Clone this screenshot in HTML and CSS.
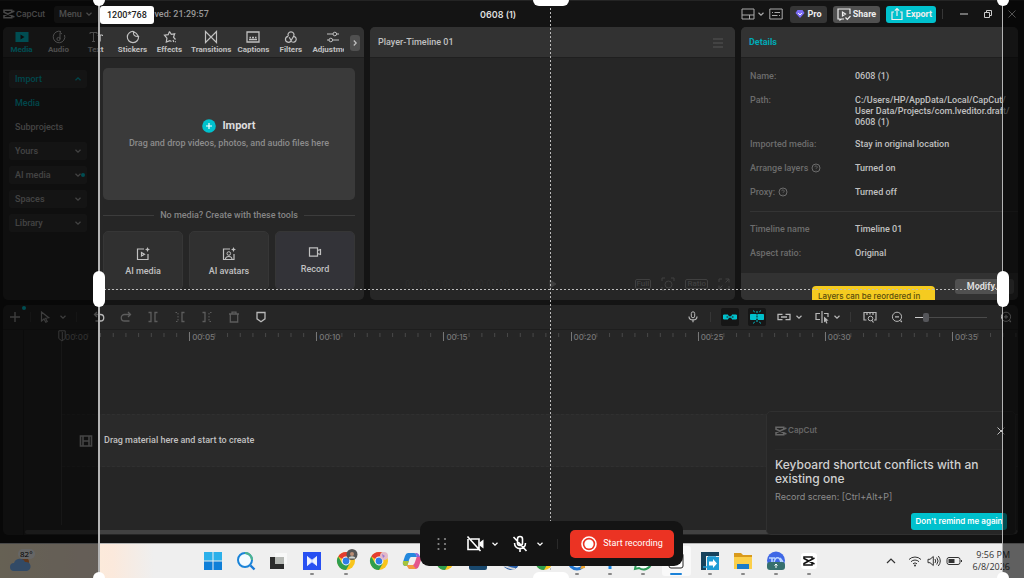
FILE: index.html
```html
<!DOCTYPE html>
<html lang="en">
<head>
<meta charset="utf-8">
<meta name="viewport" content="width=device-width, initial-scale=1">
<title>0608 (1) - CapCut</title>
<link rel="stylesheet" href="styles.css">
</head>
<body>
<svg class="symbols" aria-hidden="true">
  <symbol id="chev" viewBox="0 0 8 8"><path d="M1.5 2.8 4 5.2 6.5 2.8"/></symbol>
  <symbol id="chev-up" viewBox="0 0 8 8"><path d="M1.5 5.2 4 2.8 6.5 5.2"/></symbol>
  <symbol id="capcut" viewBox="0 0 12 10"><path d="M8.8 2.9V1.2H1v2.1L11.4 8M8.800 7.100v1.700H1V6.700L11.400 2" stroke-width="1.6"/></symbol>
  <symbol id="chrome" viewBox="0 0 20 20"><g stroke="none"><circle cx="10" cy="10" r="9" fill="#f9c51d"/><path d="M10 10 2.2 5.5A9 9 0 0 1 17.8 5.5H10z" fill="#e43d30"/><path d="M10 19A9 9 0 0 1 2.2 5.5L6.100 12.200l7.800 0z" fill="#2f9e4f"/><circle cx="10" cy="10" r="4.400" fill="#fff"/><circle cx="10" cy="10" r="3.400" fill="#2f7de8"/></g></symbol>
  <symbol id="help" viewBox="0 0 10 10"><circle cx="5" cy="5" r="4"/><path d="M3.8 4.100a1.200 1.200 0 1 1 1.800 1c-.5.300-.6.500-.6.900M5 7v.5" stroke-width=".8"/></symbol>
</svg>

<main class="app">
  <header class="titlebar">
    <div class="title-left">
      <span class="brand"><svg class="i12"><use href="#capcut"/></svg>CapCut</span>
      <button class="menu-btn">Menu <svg class="i8"><use href="#chev"/></svg></button>
      <span class="saved">Auto saved: 21:29:57</span>
    </div>
    <h1 class="project">0608 (1)</h1>
    <div class="title-right">
      <button class="plain layout" aria-label="Layout"><svg class="i14" viewBox="0 0 14 14"><path d="M1 2h12v10H1zM1 8h12M8.500 8v4"/></svg><svg class="i8"><use href="#chev"/></svg></button>
      <button class="plain keys" aria-label="Shortcuts"><svg class="i14" viewBox="0 0 14 14"><path d="M.8 2h12.400v10H.8zM3 5.500h1M5.500 5.500H11M3 8.500h5.500M10 8.500h1"/></svg></button>
      <button class="pill pro"><svg class="i10" viewBox="0 0 10 10"><path d="M2.500 1h5L9.500 4 5 9 .5 4z" fill="#7b6cf6" stroke="none"/><path d="M3.200 4 5 6l1.800-2" stroke="#fff"/></svg>Pro</button>
      <button class="pill share"><svg class="i14" viewBox="0 0 14 14"><path d="M7 12H4.500L3 13v-1H1V2h12v5M5.500 5v4l3-2zM8.500 10.500l1.800 1.800L13.500 9" stroke-width="1.200"/></svg>Share</button>
      <button class="pill export"><svg class="i14" viewBox="0 0 14 14"><path d="M4 5H2v7.500h10V5h-2M7 9V1.500M4.800 3.700 7 1.500l2.200 2.200" stroke-width="1.200"/></svg>Export</button>
      <span class="sep"></span>
      <button class="plain win" aria-label="Minimize"><svg class="i10" viewBox="0 0 10 10"><path d="M1 5h8"/></svg></button>
      <button class="plain win" aria-label="Restore"><svg class="i10" viewBox="0 0 10 10"><path d="M1.500 3.500h5v5h-5zM3.500 3.500v-2h5v5h-2"/></svg></button>
      <button class="plain win" aria-label="Close"><svg class="i10" viewBox="0 0 10 10"><path d="m1.500 1.500 7 7m0-7-7 7"/></svg></button>
    </div>
  </header>

  <div class="workspace">
    <section class="panel media">
      <nav class="panel-head tabs">
        <button class="tab active"><svg class="i14" viewBox="0 0 14 14"><path d="M.5 2h13v10H.5z" fill="currentColor" stroke="none"/><path d="M5.500 4.500v5l4-2.500z" fill="#222" stroke="none"/></svg>Media</button>
        <button class="tab"><svg class="i14" viewBox="0 0 14 14"><path d="M9 1.500A5.800 5.800 0 1 0 12.500 5M8 9V2.500l2 1.500"/><circle cx="6.500" cy="9" r="1.600"/></svg>Audio</button>
        <button class="tab"><svg class="i14" viewBox="0 0 14 14"><path d="M1 4V2.500h7V4M4.500 2.500v9M3 11.500h3M9 6V5h4.500v1M11.200 5v6.500"/></svg>Text</button>
        <button class="tab"><svg class="i14" viewBox="0 0 14 14"><path d="M7.500 1.500C7 5 8.500 6.700 12.500 6.500 11 3.500 10 2.500 7.500 1.500A5.600 5.600 0 1 0 12.500 6.500" stroke-width="1.200"/></svg>Stickers</button>
        <button class="tab"><svg class="i14" viewBox="0 0 14 14"><path d="m6.500 1.500 1.800 2.800 3.400-.5-1.200 3.400 2 2.300M6.500 1.500 5.200 4.700 1.500 5.200l2.400 2.900L3.300 12l3.500-1.400 1.700 1M10 10l.8 2M12 11.500l.8.500" stroke-width="1.200"/></svg>Effects</button>
        <button class="tab"><svg class="i14" viewBox="0 0 14 14"><path d="M1.500 1.500v11L7 7zM12.500 1.500v11L7 7z" stroke-width="1.200"/></svg>Transitions</button>
        <button class="tab"><svg class="i14" viewBox="0 0 14 14"><path d="M1 2h12v10H1zM3 9.500h8M3.500 7.500h1.500M6 7.500h2M9 7.500h1.500" stroke-width="1.300"/></svg>Captions</button>
        <button class="tab"><svg class="i14" viewBox="0 0 14 14"><path d="M4.400 6.300A3 3 0 1 1 9.600 6.300L7.400 10M9.800 6.300a3 3 0 1 1-3 4.700M4.200 6.300a3 3 0 1 0 3 4.200L5.200 7.200" stroke-width="1.200"/></svg>Filters</button>
        <button class="tab last"><svg class="i14" viewBox="0 0 14 14"><path d="M1 4h6M10.500 4H13M1 10h2M7 10h6" stroke-width="1.200"/><circle cx="8.800" cy="4" r="1.800"/><circle cx="4.800" cy="10" r="1.800"/></svg>Adjustment</button>
        <button class="more" aria-label="More tabs"><svg class="i8" viewBox="0 0 8 8"><path d="M2.800 1.500 5.200 4 2.800 6.500"/></svg></button>
      </nav>
      <div class="media-body">
        <nav class="sidebar">
          <button class="side boxed active">Import<svg class="i8"><use href="#chev-up"/></svg></button>
          <button class="side active">Media</button>
          <button class="side">Subprojects</button>
          <button class="side boxed">Yours<svg class="i8"><use href="#chev"/></svg></button>
          <button class="side boxed">AI media<svg class="i8"><use href="#chev"/></svg><i class="dot"></i></button>
          <button class="side boxed">Spaces<svg class="i8"><use href="#chev"/></svg></button>
          <button class="side boxed">Library<svg class="i8"><use href="#chev"/></svg></button>
        </nav>
        <div class="media-main">
          <button class="drop">
            <span class="drop-title"><svg class="i14" viewBox="0 0 14 14"><circle cx="7" cy="7" r="6.800" fill="#00c1cd" stroke="none"/><path d="M7 4v6M4 7h6" stroke="#fff" stroke-width="1.200"/></svg>Import</span>
            <span class="drop-hint">Drag and drop videos, photos, and audio files here</span>
          </button>
          <p class="divider">No media? Create with these tools</p>
          <div class="cards">
            <button class="card"><svg class="i14" viewBox="0 0 14 14"><path d="M8 2H1.500v10.500H12V7M5.500 5.500v3.500L8.500 7.200z" stroke-width="1.200"/><path d="m11.500 0 .8 1.700 1.700.8-1.700.8-.8 1.700-.8-1.700L9 2.500l1.700-.8z" fill="currentColor" stroke="none"/></svg>AI media</button>
            <button class="card"><svg class="i14" viewBox="0 0 14 14"><path d="M8 2H1.500v10.500H12V7M3.500 12.500c0-4 6.500-4 6.500 0" stroke-width="1.200"/><circle cx="6.800" cy="6.500" r="1.800"/><path d="m11.500 0 .8 1.700 1.700.8-1.700.8-.8 1.700-.8-1.700L9 2.500l1.700-.8z" fill="currentColor" stroke="none"/></svg>AI avatars</button>
            <button class="card record"><svg class="i14" viewBox="0 0 14 14"><path d="M1.500 2.800h8v8.400h-8zM9.500 5.500 12.500 4.500v5L9.500 8.500" stroke-width="1.200"/></svg>Record</button>
          </div>
        </div>
      </div>
    </section>

    <section class="panel player">
      <div class="panel-head"><h2>Player-Timeline 01</h2><button class="plain faint" aria-label="Player menu"><svg class="i12" viewBox="0 0 12 12"><path d="M1 2h10M1 6h10M1 10h10"/></svg></button></div>
      <div class="player-foot">
        <span class="timecode">00:00:00:00 / 00:00:00:00</span>
        <button class="plain" aria-label="Play"><svg class="i10" viewBox="0 0 10 10"><path d="M2 1v8l6-4z" fill="currentColor"/></svg></button>
        <span class="view-tools">
          <button class="tag">Full</button>
          <button class="plain" aria-label="Focus"><svg class="i14" viewBox="0 0 14 14"><path d="M1 4V1h3M10 1h3v3M4 13H1v-3M10 12l2.500 1.500"/><circle cx="7.500" cy="7.500" r="3.500"/></svg></button>
          <button class="tag">Ratio</button>
          <button class="plain" aria-label="Full screen"><svg class="i12" viewBox="0 0 12 12"><path d="M7.500 1H11v3.500M11 1 7.500 4.500M4.500 11H1V7.500M1 11l3.500-3.500M1 4V1h3M8 11h3V8"/></svg></button>
        </span>
      </div>
    </section>

    <section class="panel details">
      <div class="panel-head"><h2 class="teal">Details</h2></div>
      <dl class="facts">
        <dt>Name:</dt><dd>0608 (1)</dd>
        <dt>Path:</dt><dd class="path">C:/Users/HP/AppData/Local/CapCut/<br>User Data/Projects/com.lveditor.draft/<br>0608 (1)</dd>
        <dt>Imported media:</dt><dd>Stay in original location</dd>
        <dt>Arrange layers <svg class="i10"><use href="#help"/></svg></dt><dd>Turned on</dd>
        <dt>Proxy: <svg class="i10"><use href="#help"/></svg></dt><dd>Turned off</dd>
      </dl>
      <dl class="facts second">
        <dt>Timeline name</dt><dd>Timeline 01</dd>
        <dt>Aspect ratio:</dt><dd>Original</dd>
      </dl>
      <div class="details-foot"><button class="modify">Modify...</button></div>
      <div class="tip">Layers can be reordered in</div>
    </section>
  </div>

  <section class="panel timeline">
    <div class="tools">
      <button class="tool add" aria-label="Add"><svg class="i12" viewBox="0 0 12 12"><path d="M6 1v10M1 6h10" stroke-width="1.400"/></svg><i class="dot"></i></button>
      <span class="sep"></span>
      <button class="tool" aria-label="Select"><svg class="i12" viewBox="0 0 12 12"><path d="M2.500 1v9l2.500-2 1.800 3.200 1.400-.8L6.500 7.200l3.200-.5z" stroke-width="1.200"/></svg></button>
      <button class="tool slim" aria-label="Select options"><svg class="i8"><use href="#chev"/></svg></button>
      <span class="sep gap"></span>
      <button class="tool lit" aria-label="Undo"><svg class="i12" viewBox="0 0 12 12"><path d="M4 1 1.500 3.500 4 6M1.500 3.500H7.500a3.200 3.200 0 0 1 0 6.500H2.500" stroke-width="1.300"/></svg></button>
      <button class="tool off" aria-label="Redo"><svg class="i12" viewBox="0 0 12 12"><path d="M8 1l2.500 2.500L8 6M10.500 3.500H4.500a3.200 3.200 0 0 0 0 6.500h5" stroke-width="1.300"/></svg></button>
      <button class="tool off" aria-label="Split"><svg class="i12" viewBox="0 0 12 12"><path d="M1.500 1.500H4v9H1.500M10.500 1.500H8v9h2.500" stroke-width="1.300"/></svg></button>
      <button class="tool off" aria-label="Delete left"><svg class="i12" viewBox="0 0 12 12"><path d="M10.500 1.500H8v9h2.500" stroke-width="1.300"/><path d="M1.500 1.500H4v9H1.500" stroke-dasharray="1.500 1.500"/></svg></button>
      <button class="tool off" aria-label="Delete right"><svg class="i12" viewBox="0 0 12 12"><path d="M1.500 1.500H4v9H1.500" stroke-width="1.300"/><path d="M10.500 1.500H8v9h2.500" stroke-dasharray="1.500 1.500"/></svg></button>
      <button class="tool off" aria-label="Delete"><svg class="i12" viewBox="0 0 12 12"><path d="M1 3h10M4 3V1.200h4V3M2.300 3v8h7.400V3" stroke-width="1.300"/></svg></button>
      <button class="tool lit" aria-label="Marker"><svg class="i12" viewBox="0 0 12 12"><path d="M2 1.500h8v6.300L6 10.800 2 7.800z" stroke-width="1.300"/></svg></button>
      <span class="grow"></span>
      <button class="tool lit" aria-label="Record voice"><svg class="i12" viewBox="0 0 12 12"><rect x="4.300" y=".8" width="3.400" height="6" rx="1.700"/><path d="M2 5.500c0 4.600 8 4.600 8 0M6 9v2.300" stroke-width="1.200"/></svg></button>
      <span class="sep tight"></span>
      <button class="tool" aria-label="Main track magnet"><span class="on"><svg class="i14" viewBox="0 0 14 14"><path d="M.5 5H5v4H.5zM9 5h4.500v4H9z" fill="currentColor"/><path d="M5 7h4" stroke-width="1.500"/><path d="M3.500 7H5M9 7h1.500" stroke="#161616"/></svg></span></button>
      <button class="tool" aria-label="Auto snapping"><span class="on"><svg class="i14" viewBox="0 0 14 14"><path d="M.5 4.500H6v5H.5zM8 4.500h5.500v5H8z" fill="currentColor"/><path d="M7 1v12M3.500.5l1 1.800M10.500.5l-1 1.800M3.500 13.500l1-1.800M10.500 13.500l-1-1.800" stroke-dasharray="2 1"/></svg></span></button>
      <button class="tool lit" aria-label="Linkage"><svg class="i14" viewBox="0 0 14 14"><path d="M5.500 4.300H1v5.400h4.500M8.500 4.300H13v5.400H8.500M4 7h6" stroke-width="1.300"/></svg></button>
      <button class="tool slim lit" aria-label="Linkage options"><svg class="i8"><use href="#chev"/></svg></button>
      <button class="tool lit" aria-label="Preview axis"><svg class="i14" viewBox="0 0 14 14"><path d="M5 3.500H1v6h4M7 1v12M9 3.500h4V7" stroke-width="1.200"/><path d="m9 6.500 4.500 4-2 .3 1 2.400-1.200.4-1-2.300L9 12.500z" fill="currentColor" stroke="none"/></svg></button>
      <button class="tool slim lit" aria-label="Preview options"><svg class="i8"><use href="#chev"/></svg></button>
      <span class="sep tight"></span>
      <button class="tool lit" aria-label="Fit timeline"><svg class="i14" viewBox="0 0 14 14"><path d="M3.500 10H1V2.500h12V10h-2M4 2.500V5M7 2.500v2M10 2.500V5M9 10.500l1.500 2" stroke-width="1.200"/><circle cx="7.500" cy="8.500" r="2.300"/></svg></button>
      <button class="tool lit" aria-label="Zoom out"><svg class="i12" viewBox="0 0 12 12"><circle cx="6" cy="5.800" r="4.600"/><path d="M4 5.800h4M9.500 9.500l1.300 1.500" stroke-width="1.200"/></svg></button>
      <input class="zoom" type="range" min="0" max="100" value="12" aria-label="Timeline zoom">
      <button class="tool lit end" aria-label="Zoom in"><svg class="i12" viewBox="0 0 12 12"><circle cx="6" cy="5.800" r="4.600"/><path d="M4 5.800h4M6 3.800v4M9.500 9.500l1.300 1.500" stroke-width="1.200"/></svg></button>
    </div>
    <div class="tracks">
      <div class="gutter"></div>
      <div class="lanes">
        <div class="ruler">
          <span>00:00</span><span>00:05</span><span>00:10</span><span>00:15</span><span>00:20</span><span>00:25</span><span>00:30</span><span>00:35</span>
        </div>
        <div class="lane"><svg class="i14" viewBox="0 0 14 14"><path d="M1.500 2h11v10h-11zM4 2v10M10 2v10M4 7h6" stroke-width="1.600"/></svg>Drag material here and start to create</div>
        <svg class="playhead" viewBox="0 0 8 12"><path d="M.8.8h6.400v7.700L4 11 .8 8.500z"/></svg>
      </div>
    </div>
    <div class="scroll"></div>
    <aside class="toast">
      <div class="toast-head"><span class="brand"><svg class="i12"><use href="#capcut"/></svg>CapCut</span><button class="plain" aria-label="Dismiss"><svg class="i10" viewBox="0 0 10 10"><path d="m1.500 1.500 7 7m0-7-7 7"/></svg></button></div>
      <h2>Keyboard shortcut conflicts with an existing one</h2>
      <p>Record screen: [Ctrl+Alt+P]</p>
      <button class="remind">Don't remind me again</button>
    </aside>
  </section>
</main>

<footer class="taskbar">
  <div class="weather"><svg viewBox="0 0 24 24"><circle cx="16" cy="12" r="4" fill="#f08a45"/><path d="M5 21a4 4 0 0 1 0-8 6 6 0 0 1 11-1 4.500 4.500 0 0 1 2 9z" fill="#7db8ff"/></svg><span>82°</span></div>
  <div class="dock">
    <span><svg viewBox="0 0 20 20"><path d="M1 1h8.500v8.500H1zM10.500 1H19v8.500h-8.500z" fill="#2cb0ea"/><path d="M1 10.500h8.500V19H1zM10.500 10.500H19V19h-8.500z" fill="#0f7fd8"/></svg></span>
    <span><svg viewBox="0 0 20 20"><path d="m14.500 14.500 4 4" stroke="#1878d6" stroke-width="2.400"/><circle cx="9" cy="9" r="7" fill="#f4fbff" stroke="#1b84d8" stroke-width="2"/><path d="M9 2a7 7 0 0 1 7 7" stroke="#4db58d" stroke-width="2"/></svg></span>
    <span><svg viewBox="0 0 20 20"><path d="M1 6h14v12H1z" fill="#2b2b2b"/><path d="M6 2h12v11H6z" fill="#f8f8f8"/><path d="M6 6h9v7H6z" fill="#b5b8b4"/></svg></span>
    <span class="run"><svg viewBox="0 0 20 20"><path d="M1 1h18v18H1z" fill="#2850f2"/><path d="m5 5 5 3.500L15 5v10l-5-3.500L5 15z" fill="#bccbff"/><path d="m5 5 5 5-5 5zM15 5l-5 5 5 5z" fill="#eef2ff"/></svg></span>
    <span class="run"><svg viewBox="0 0 20 20"><use href="#chrome"/><circle cx="16" cy="3.500" r="5.500" fill="#555"/><circle cx="16" cy="3" r="2" fill="#b98d74"/><path d="M12.500 7.500c.5-3 6.500-3 7 0z" fill="#cfd4d0"/></svg></span>
    <span><svg viewBox="0 0 20 20"><use href="#chrome"/><circle cx="15" cy="5" r="4" fill="#e4b9c8"/><path d="m13 3 3 2-2 2z" fill="#9b79d6"/></svg></span>
    <span><svg viewBox="0 0 20 20"><path d="M6 2h6q2 0 3 4H9q-1 0-2 3l-2 6H4q-4 0-3-4l2-6q1-3 3-3z" fill="#2388dd"/><path d="M1 10h6l-2 5H4q-4 0-3-5z" fill="#a6c43c"/><path d="M14 18H8q-2 0-3-4h6q1 0 2-3l2-6h1q4 0 3 4l-2 6q-1 3-3 3z" fill="#e4568b"/><path d="M14 18H8q-2 0-3-4h6z" fill="#f39a3f"/><path d="M12 2q2 0 3 4h3q-1-4-4-4z" fill="#8a63d8"/></svg></span>
    <span><svg viewBox="0 0 20 20"><use href="#chrome"/></svg></span>
    <span><svg viewBox="0 0 20 20"><rect x="1" y="1" width="18" height="18" rx="2" fill="#19486d"/></svg></span>
    <span><svg viewBox="0 0 20 20"><circle cx="10" cy="10" r="9" fill="#285ea8"/><path d="M2 14q8 4 12 4" stroke="#d5d8dc" stroke-width="2"/></svg></span>
    <span><svg viewBox="0 0 20 20"><use href="#chrome"/></svg></span>
    <span class="run"><svg viewBox="0 0 20 20"><circle cx="10" cy="10" r="8" stroke="#2377d1" stroke-width="3"/><path d="m13 18 5-1V8z" fill="#f0a530"/></svg></span>
    <span class="run"><svg viewBox="0 0 20 20"><path d="M10 18V6" stroke="#1a87e0" stroke-width="3"/></svg></span>
    <span class="run"><svg viewBox="0 0 20 20"><path d="M2 18l1-5a8 8 0 1 1 3 4z" fill="#fff" stroke="#2d9a58" stroke-width="2"/></svg></span>
    <span class="run current"><svg viewBox="0 0 20 20"><rect x="3" y="2" width="14" height="15" rx="2" fill="#fff" stroke="#222"/></svg></span>
    <span class="run"><svg viewBox="0 0 20 20"><path d="M1 1h18v4H6v14H1z" fill="#16425c"/><path d="M7 6h12v13H7z" fill="#1e9bd4"/><path d="M3 16h4M8 6h8" stroke="#1e9bd4" stroke-width="1.500"/><path d="M9 10.500h4V8l4 4.500-4 4.500v-2.500H9z" fill="#fff"/></svg></span>
    <span class="run"><svg viewBox="0 0 20 20"><path d="M1 2h7l2 2h9v14H1z" fill="#d99a1c"/><path d="M1 6h18v12H1z" fill="#fbcf4a"/><path d="M4 13h12v5H4z" fill="#1b7bc9"/></svg></span>
    <span class="run"><svg viewBox="0 0 20 20"><circle cx="10" cy="9.500" r="9" fill="#3f68e6"/><path d="M3 7h6M6 7v5M8 12c1-7 6-7 7 0M14 7l3 4" stroke="#b9d4ff" stroke-width="1.600"/><rect x="1" y="11" width="18" height="8" rx="3" fill="#36706e"/><path d="M10 17v-4m-1.500 1.500L10 13l1.500 1.500" stroke="#fff"/></svg></span>
    <span class="run"><svg viewBox="0 0 20 20"><rect x="2" y="2" width="16" height="16" rx="3" fill="#fff"/><path d="M13 7.500V6H5v1.500L15.500 13M13 12.500V14H5v-1.500L15.500 7" stroke="#111" stroke-width="1.600"/></svg></span>
  </div>
  <div class="tray">
    <svg class="i10" viewBox="0 0 10 10"><path d="M1 7l4-4 4 4" stroke-width="1.200"/></svg>
    <svg class="i14" viewBox="0 0 14 14"><path d="M1 5.500a8.500 8.500 0 0 1 12 0M3 7.700a5.600 5.600 0 0 1 8 0M5 9.800a2.900 2.900 0 0 1 4 0"/><circle cx="7" cy="11.500" r="1" fill="currentColor" stroke="none"/></svg>
    <svg class="i14" viewBox="0 0 14 14"><path d="M1 5.300h2L6.300 2.500v9L3 8.700H1zM8 5q1.500 2 0 4M9.700 3.500q2.800 3.500 0 7M11.300 2q4 5 0 10"/></svg>
    <svg class="i16" viewBox="0 0 16 14"><rect x="1" y="3.500" width="13" height="7" rx="2"/><path d="M2.500 5h6v4h-6z" fill="currentColor" stroke="none"/><path d="M15.500 6v2"/></svg>
    <time datetime="2026-06-08T21:56"><span>9:56 PM</span><span>6/8/2026</span></time>
  </div>
</footer>

<div class="capture">
  <div class="shade left"></div>
  <div class="frame">
    <i class="guide h"></i><i class="guide v"></i>
    <i class="knob tl"></i><i class="knob tr"></i><i class="knob bl"></i><i class="knob br"></i>
    <i class="bar t"></i><i class="bar b"></i><i class="bar l"></i><i class="bar r"></i>
    <output class="size">1200*768</output>
  </div>
  <div class="shade right"></div>
  <div class="recorder">
    <svg class="grip" viewBox="0 0 10 14"><g fill="#8a8a8a" stroke="none"><circle cx="1.500" cy="2" r="1.100"/><circle cx="8" cy="2" r="1.100"/><circle cx="1.500" cy="7" r="1.100"/><circle cx="8" cy="7" r="1.100"/><circle cx="1.500" cy="12" r="1.100"/><circle cx="8" cy="12" r="1.100"/></g></svg>
    <span class="device">
      <button class="plain" aria-label="Camera off"><svg class="i18" viewBox="0 0 18 18"><path d="M4.500 4H13v10.500H2V4M1.500 1.500l13 14.500" stroke-width="1.600"/><path d="M13.500 7.500 17.500 4.500v9l-4-3z" fill="currentColor" stroke="none"/></svg></button>
      <button class="plain" aria-label="Camera options"><svg class="i8"><use href="#chev"/></svg></button>
    </span>
    <span class="device">
      <button class="plain" aria-label="Microphone off"><svg class="i18" viewBox="0 0 18 18"><path d="M6.500 8V4a2.500 2.500 0 0 1 5 0v4a2.500 2.500 0 0 1-5 0M3.500 8c0 7.500 11 7.500 11 0M9 13.500V17M2.500 2l13 14" stroke-width="1.600"/></svg></button>
      <button class="plain" aria-label="Microphone options"><svg class="i8"><use href="#chev"/></svg></button>
    </span>
    <span class="sep"></span>
    <button class="start"><svg class="i16" viewBox="0 0 16 16"><circle cx="8" cy="8" r="7" stroke-width="1.600"/><circle cx="8" cy="8" r="4.600" fill="currentColor" stroke="none"/></svg>Start recording</button>
  </div>
</div>
</body>
</html>
```
FILE: styles.css
```css
* { box-sizing: border-box; }

body {
  margin: 0;
  height: 100vh;
  display: flex;
  flex-direction: column;
  overflow: hidden;
  background: #141414;
  color: #c0c0c0;
  font: 500 9px/11px Roboto, "Noto Sans", sans-serif;
}

h1, h2, p, dl, dd { margin: 0; font: inherit; }
button { margin: 0; padding: 0; border: 0; background: none; color: inherit; font: inherit; }
svg { flex: none; fill: none; stroke: currentColor; overflow: visible; }
.symbols { position: absolute; width: 0; height: 0; }
.i8 { width: 8px; height: 8px; stroke-width: 1.2px; }
.i10 { width: 10px; height: 10px; }
.i12 { width: 12px; height: 12px; }
.i14 { width: 14px; height: 14px; }
.i16 { width: 16px; height: 16px; }
.i18 { width: 18px; height: 18px; }
.plain { display: inline-flex; align-items: center; justify-content: center; }
.sep { width: 1px; height: 10px; background: #363636; }
.grow { flex: 1; }
.dot { width: 4px; height: 4px; border-radius: 50%; background: #00c1cd; }

/* application window */
.app {
  flex: 1;
  min-height: 0;
  display: flex;
  flex-direction: column;
  padding: 0 6px 8px 3px;
  border-top: 1px solid #242424;
}

.titlebar { height: 26px; flex: none; display: grid; grid-template-columns: 47% auto 1fr; align-items: center; }
.title-left, .title-right { display: flex; align-items: center; }
.brand { display: flex; align-items: center; gap: 1px; font: 600 8px/11px Inter, sans-serif; color: #b0b0b0; }
.menu-btn { display: flex; align-items: center; gap: 3px; height: 17px; padding: 0 5px; margin-left: 9px; border-radius: 3px; background: #2c2c2c; }
.saved { margin-left: 26px; color: #999; }
.project { font-family: Inter, sans-serif; font-weight: 600; color: #ddd; }
.title-right { justify-content: flex-end; gap: 6px; }
.layout { gap: 2px; color: #aaa; }
.keys { margin: 0 1px 0 -2px; color: #aaa; }
.pill { display: flex; align-items: center; justify-content: center; gap: 2px; height: 17px; border-radius: 3px; background: #353535; color: #eee; font-weight: 700; }
.pro { width: 37px; }
.share { width: 47px; background: #505050; }
.export { width: 50px; background: #00c1cd; }
.title-right .sep { margin-right: 6px; }
.win { width: 18px; color: #ccc; }
.win:last-child { width: 12px; margin-left: 3px; }

.workspace { flex: 273; min-height: 0; display: flex; gap: 6px; }
.panel { position: relative; background: #262626; border-radius: 5px; overflow: hidden; }
.panel-head { height: 31px; flex: none; display: flex; align-items: center; justify-content: space-between; padding: 1px 11px 0 8px; background: #323232; border-bottom: 1px solid #1f1f1f; }
.media { flex: 361; min-width: 0; display: flex; flex-direction: column; }
.player { flex: 365; min-width: 0; display: flex; flex-direction: column; justify-content: space-between; }
.details { flex: 277; min-width: 0; display: flex; flex-direction: column; }

.tabs { justify-content: flex-start; padding: 1px 20px 0 0; overflow: hidden; }
.tab { flex: none; display: flex; flex-direction: column; align-items: center; gap: 1px; min-width: 37px; padding: 0 3px; font-size: 8px; line-height: 10px; font-weight: 700; }
.tab.last { flex: 1 1 0; min-width: 0; overflow: hidden; align-items: flex-start; }
.tab.last svg { margin-left: 14px; }
.tab.active { color: #00c1cd; }
.more { position: absolute; right: 4px; top: 8px; width: 10px; height: 16px; display: grid; place-items: center; border-radius: 3px; background: #505050; }

.media-body { flex: 1; min-height: 0; display: flex; }
.sidebar { width: 95px; padding: 12px 11px 0 6px; display: flex; flex-direction: column; gap: 6px; }
.side { position: relative; flex: none; height: 18px; display: flex; align-items: center; justify-content: space-between; padding: 0 5px 0 6px; border-radius: 3px; color: #a8a8a8; }
.side.boxed { background: #343434; }
.side.active { color: #00b0bb; }
.side .dot { position: absolute; right: 2px; top: 7px; }

.media-main { flex: 1; min-width: 0; padding: 10px 9px 10px 5px; display: flex; flex-direction: column; }
.drop { flex: 1; display: flex; flex-direction: column; align-items: center; justify-content: center; gap: 5px; border-radius: 5px; background: #3a3a3a; }
.drop-title { display: flex; align-items: center; gap: 6px; font-size: 11px; line-height: 14px; font-weight: 700; color: #ddd; }
.drop-hint { color: #8c8c8c; }
.divider { flex: none; display: flex; align-items: center; gap: 6px; height: 31px; padding-bottom: 1px; color: #858585; }
.divider::before, .divider::after { content: ""; flex: 1; height: 1px; background: #3c3c3c; }
.cards { flex: none; display: grid; grid-template-columns: repeat(3, 1fr); gap: 6px; height: 59px; }
.card { display: flex; flex-direction: column; align-items: center; justify-content: center; gap: 5px; padding-top: 2px; border: 1px solid #363636; border-radius: 5px; background: #303030; }
.card.record { background: #333338; padding: 0 0 2px; }

.faint { color: #555; }
.player-foot { display: grid; grid-template-columns: 1fr auto 1fr; align-items: center; height: 32px; padding: 0 5px; color: #404040; }
.timecode { padding-left: 30px; color: #2b2b2b; }
.view-tools { display: flex; align-items: center; justify-content: flex-end; gap: 10px; }
.tag { border: 1px solid currentColor; border-radius: 2px; padding: 0 1px; font-size: 8px; line-height: 8px; }

.teal { color: #00aab6; font-weight: 700; }
.facts { flex: none; display: grid; grid-template-columns: 105px 1fr; row-gap: 13px; padding: 13px 0 13px 9px; white-space: nowrap; }
.facts dt { display: flex; align-items: flex-start; gap: 3px; color: #6c6c6c; }
.path { margin-bottom: -2px; }
.facts.second { margin-left: 9px; padding: 12px 0 0; border-top: 1px solid #343434; }
.details-foot { margin-top: auto; height: 27px; display: flex; justify-content: flex-end; align-items: center; padding: 0 4px; background: #323232; }
.modify { width: 59px; height: 15px; border-radius: 3px; background: #505050; color: #ddd; font-weight: 700; }
.tip { position: absolute; left: 71px; bottom: 0; width: 123px; height: 14px; padding: 5px 6px; border-radius: 4px 4px 0 0; background: #f5cb20; color: #594b0d; font: 500 8px/11px Inter, sans-serif; overflow: hidden; }

/* timeline */
.timeline { flex: 230; min-height: 0; margin-top: 5px; display: flex; flex-direction: column; }
.tools { flex: none; display: flex; align-items: center; height: 25px; border-bottom: 1px solid #1e1e1e; }
.tool { position: relative; flex: none; width: 27px; height: 24px; display: flex; align-items: center; justify-content: center; color: #999; }
.tool.slim { width: 10px; }
.tool.off { color: #5c5c5c; }
.tool.lit { color: #b8b8b8; }
.tool.slim.lit { margin: 0 4px 0 -3px; }
.tool.add { width: 24px; margin-right: 3px; }
.tool.add .dot { position: absolute; right: 1px; top: 1px; }
.tool.end { width: 24px; }
.tools .sep.gap { margin: 0 8px; }
.tools .sep.tight { margin: 0 5px 0 4px; }
.on { display: grid; place-items: center; width: 18px; height: 18px; border-radius: 2px; background: #161616; color: #00c1cd; }
.zoom { appearance: none; flex: none; width: 72px; height: 8px; margin: 0 7px 0 5px; background: linear-gradient(90deg, #ccc 8px, #4a4a4a 8px) center / 100% 1px no-repeat; }
.zoom::-webkit-slider-thumb { appearance: none; width: 6px; height: 9px; border-radius: 2px; background: #55565a; }

.tracks { flex: 1; min-height: 0; display: flex; }
.gutter { width: 58px; padding-left: 20px; }
.gutter::before { content: ""; display: block; width: 1px; height: 100%; background: #1d1d1d; }
.lanes { position: relative; flex: 1; min-width: 0; margin-bottom: 10px; border-left: 1px solid #3a3a3a; }
.ruler { display: flex; height: 16px; overflow: hidden; }
.ruler span { flex: none; width: 13.3%; padding: 3px 0 0 3px; color: #777; font: 500 8px/9px Inter, sans-serif; background: linear-gradient(#777, #777) 0 2px / 1px 9px no-repeat, linear-gradient(90deg, #484848 1px, transparent 1px) 0 3px / 10% 4px repeat-x; }
.lane { display: flex; align-items: center; gap: 11px; height: 53px; margin-top: 68px; padding-left: 17px; background: #2a2a2a; border-top: 1px dashed #303030; border-bottom: 1px dashed #303030; }
.lane svg { color: #aaa; }
.playhead { position: absolute; left: -4px; top: 0; width: 8px; height: 12px; color: #888; }
.scroll { position: absolute; left: 22px; right: 0; bottom: 1px; height: 4px; border-radius: 2px; background: #414141; }

.toast { position: absolute; right: 2px; bottom: 0; width: 250px; height: 124px; padding: 0 9px 4px 8px; display: flex; flex-direction: column; border: 1px solid #303030; border-radius: 5px; background: #262626; }
.toast-head { flex: none; display: flex; align-items: center; justify-content: space-between; height: 38px; border-bottom: 1px solid #2b2b2b; }
.toast .brand { color: #666; }
.toast h2 { margin-top: 8px; font: 500 12px/14px Inter, sans-serif; color: #d0d0d0; }
.toast p { margin-top: 5px; color: #8c8c8c; font-family: Inter, sans-serif; font-weight: 400; }
.remind { align-self: flex-end; margin: auto -1px 0 0; width: 96px; height: 17px; border-radius: 3px; background: #00c1cd; color: #fff; font: 600 8px/11px Inter, sans-serif; white-space: nowrap; }

/* desktop taskbar */
.taskbar { flex: none; height: 35px; display: flex; background: linear-gradient(90deg, #fff2d2, #fbe9dc 11%, #efefef 15%); border-top: 1px solid #b5b5b5; color: #333; font-family: "Open Sans", "Noto Sans", sans-serif; }
.weather { position: relative; width: 19.2%; padding: 6px 0 0 9px; }
.weather svg { width: 24px; height: 24px; stroke: none; }
.weather span { position: absolute; left: 18px; top: 5px; padding: 0 2px; border-radius: 6px; background: #fff; color: #000; font-size: 8px; line-height: 10px; }
.dock { width: 61.4%; display: grid; grid-template-columns: repeat(19, 1fr); }
.dock > span { position: relative; display: grid; place-items: center; }
.dock svg { width: 20px; height: 20px; stroke: none; }
.dock .run::after { content: ""; position: absolute; bottom: 3px; width: 4px; height: 2px; border-radius: 1px; background: #888; }
.dock .current { margin: 2px; border-radius: 3px; background: #f9f9f9; }
.dock .current::after { bottom: 1px; width: 12px; background: #1b82d8; }
.tray { flex: 1; display: flex; align-items: center; justify-content: flex-end; gap: 5px; padding-right: 14px; }
.tray > :first-child { margin-right: 7px; }
.tray time { display: flex; flex-direction: column; align-items: flex-end; width: 43px; white-space: nowrap; line-height: 12px; }

/* screen recorder layer */
.capture { position: absolute; inset: 0; display: flex; overflow: hidden; pointer-events: none; }
.shade { background: rgba(0, 0, 0, .6); }
.shade.left { width: 98px; }
.shade.right { width: 21px; }
.frame { position: relative; flex: 1; border: solid #b4b4b4; border-width: 0 1px 0 2px; }
.frame i { position: absolute; }
.guide.h { left: 0; right: 0; top: 50%; height: 1px; background: repeating-linear-gradient(90deg, #bbb 0 2px, transparent 2px 4px); }
.guide.v { top: 0; bottom: 0; left: calc(50% - 1px); width: 1px; background: repeating-linear-gradient(#bbb 0 2px, transparent 2px 4px); }
.knob { width: 12px; height: 12px; border-radius: 50%; background: #fff; }
.tl, .bl { left: -7px; }
.tr, .br { right: -7px; }
.tl, .tr { top: -6px; }
.bl, .br { bottom: -6px; }
.bar { border-radius: 6px; background: #fff; }
.bar.t, .bar.b { left: calc(50% - 18px); width: 36px; height: 12px; }
.bar.t { top: -6px; }
.bar.b { bottom: -6px; }
.bar.l, .bar.r { top: calc(50% - 18px); width: 12px; height: 36px; }
.bar.l { left: -7px; }
.bar.r { right: -7px; }
.size { position: absolute; left: 0; top: 6px; height: 18px; padding: 0 7px; border-radius: 3px; background: #fff; color: #222; line-height: 18px; }
.recorder { position: absolute; left: 50%; bottom: 12px; margin-left: -92px; width: 263px; height: 45px; padding: 0 9px 0 17px; display: flex; align-items: center; justify-content: space-between; border-radius: 9px; background: #141414; color: #fff; }
.grip { width: 10px; height: 14px; margin-right: 6px; }
.device { display: flex; gap: 7px; }
.recorder .sep { background: #2a2a2a; }
.start { display: flex; align-items: center; justify-content: center; gap: 6px; width: 104px; height: 28px; border-radius: 5px; background: #eb3323; font-weight: 400; }
```
